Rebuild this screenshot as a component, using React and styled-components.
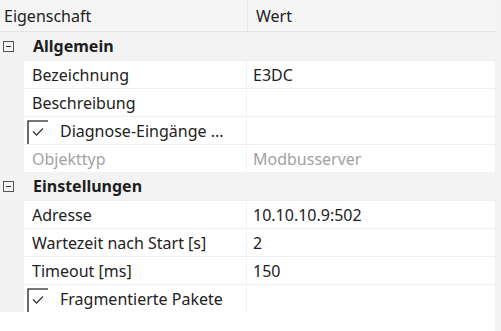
import React from "react";
import styled, { createGlobalStyle } from "styled-components";

const Global = createGlobalStyle`
  html, body { margin: 0; padding: 0; background: #ffffff; }
  body { font-family: "Noto Sans", "Open Sans", "Liberation Sans", sans-serif; }
`;

const Page = styled.div`
  width: 501px;
  height: 331px;
  display: flex;
  background: #ffffff;
  overflow: hidden;
`;

const Grid = styled.div`
  width: 495px;
  display: flex;
  flex-direction: column;
  background: #ffffff;
`;

const Strip = styled.div`
  width: 6px;
  background: #f3f3f3;
`;

const Header = styled.div`
  height: 31px;
  display: flex;
  background: #f5f5f5;
  border-bottom: 1px solid #e4e4e4;
  font-size: 16px;
  color: #222;
`;

const HeadCell = styled.div`
  display: flex;
  align-items: center;
  box-sizing: border-box;
  padding-left: ${(p) => p.$pad}px;
  ${(p) => (p.$w ? `width: ${p.$w}px; border-right: 1px solid #e6e6e6;` : "flex: 1;")}
`;

const Category = styled.div`
  height: 28px;
  display: flex;
  align-items: center;
  background: #f3f3f3;
  font-size: 16px;
  font-weight: 700;
  color: #1e1e1e;
`;

const Expander = styled.div`
  width: 9px;
  height: 9px;
  margin: 0 19px 0 3px;
  border: 1px solid #555;
  display: flex;
  align-items: center;
  justify-content: center;
  &::after {
    content: "";
    width: 5px;
    height: 1px;
    background: #333;
  }
`;

const Row = styled.div`
  height: 27px;
  display: flex;
  background: #f2f2f2;
  border-top: 1px solid #f0f0f0;
  padding-left: 24px;
  font-size: 16px;
  color: ${(p) => (p.$disabled ? "#a2a2a2" : "#222")};
`;

const NameCell = styled.div`
  width: 222px;
  margin-right: 1px;
  background: #ffffff;
  display: flex;
  align-items: center;
  padding-left: ${(p) => (p.$check ? 3 : 8)}px;
  box-sizing: border-box;
  white-space: nowrap;
  overflow: hidden;
`;

const ValueCell = styled.div`
  flex: 1;
  background: #ffffff;
  display: flex;
  align-items: center;
  padding-left: 6px;
  white-space: nowrap;
`;

const CheckIcon = styled.svg`
  flex: 0 0 auto;
  align-self: flex-end;
  margin-right: 12px;
  display: block;
`;

const Rest = styled.div`
  flex: 1;
  background: #ffffff;
`;

const CheckBox = () => (
  <CheckIcon width="21" height="24" viewBox="0 0 21 24">
    <path d="M1 24 V1 H21" fill="none" stroke="#4a4a4a" strokeWidth="1.6" />
    <path d="M6 11.5 L9.5 15 L16 8.5" fill="none" stroke="#3a3a3a" strokeWidth="1.3" />
  </CheckIcon>
);

const Prop = ({ name, value, check, disabled }) => (
  <Row $disabled={disabled}>
    <NameCell $check={check}>
      {check && <CheckBox />}
      {name}
    </NameCell>
    <ValueCell>{value}</ValueCell>
  </Row>
);

export default function App() {
  return (
    <>
      <Global />
      <Page>
        <Grid>
          <Header>
            <HeadCell $w={248} $pad={4}>Eigenschaft</HeadCell>
            <HeadCell $pad={8}>Wert</HeadCell>
          </Header>
          <Category>
            <Expander />
            Allgemein
          </Category>
          <Prop name="Bezeichnung" value="E3DC" />
          <Prop name="Beschreibung" value="" />
          <Prop name="Diagnose-Eingänge ..." value="" check />
          <Prop name="Objekttyp" value="Modbusserver" disabled />
          <Category>
            <Expander />
            Einstellungen
          </Category>
          <Prop name="Adresse" value="10.10.10.9:502" />
          <Prop name="Wartezeit nach Start [s]" value="2" />
          <Prop name="Timeout [ms]" value="150" />
          <Prop name="Fragmentierte Pakete" value="" check />
          <Rest />
        </Grid>
        <Strip />
      </Page>
    </>
  );
}
